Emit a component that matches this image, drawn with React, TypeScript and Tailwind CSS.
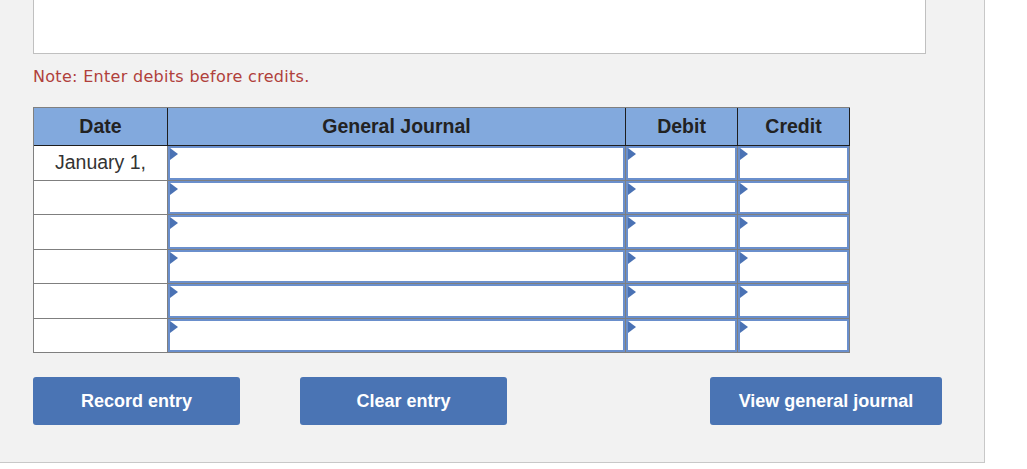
import React from "react";

const rowHeights = ["h-[35px]", "h-[34px]", "h-[35px]", "h-[34px]", "h-[35px]", "h-[34px]"];

function Tri() {
  return (
    <svg className="absolute left-0 top-0" width="8" height="12" viewBox="0 0 8 12">
      <path d="M0 0 L8 6 L0 12 Z" fill="#4a72b4" />
    </svg>
  );
}

function InputCell() {
  return (
    <div className="border-r border-b border-[#7f7f7f] bg-white">
      <div className="relative h-full w-full border-2 border-[#6a8fcc] bg-white">
        <Tri />
      </div>
    </div>
  );
}

export default function App() {
  const font = { fontFamily: '"Liberation Sans", Arial, sans-serif' } as React.CSSProperties;
  return (
    <div className="w-[1027px] h-[469px] bg-white" style={font}>
      <div className="w-[985px] h-[463px] bg-[#f2f2f2] border-r border-b border-[#c8c8c8] pl-[33px]">
        <div className="w-[893px] h-[54px] bg-white border-x border-b border-[#c0c0c0]" />
        <div
          className="mt-[13px] h-[20px] leading-[20px] text-[16px] tracking-[0.3px] text-[#b0403b]"
          style={{ fontFamily: '"DejaVu Sans", Verdana, sans-serif' }}
        >
          Note: Enter debits before credits.
        </div>
        <div className="mt-[20px] w-[817px] border-t border-l border-[#808080]">
          <div className="grid grid-cols-[134px_458px_112px_112px] h-[38px] bg-[#82a9dd] border-b border-[#1e1e1e]">
            {["Date", "General Journal", "Debit", "Credit"].map((h) => (
              <div
                key={h}
                className="flex items-center justify-center border-r border-[#1e1e1e] text-[19.5px] font-bold text-[#222]"
              >
                {h}
              </div>
            ))}
          </div>
          {rowHeights.map((rh, i) => (
            <div key={i} className={`grid grid-cols-[134px_458px_112px_112px] ${rh}`}>
              <div className="flex items-center justify-center border-r border-b border-[#7f7f7f] bg-white text-[19.5px] text-[#333]">
                {i === 0 ? "January 1," : ""}
              </div>
              <InputCell />
              <InputCell />
              <InputCell />
            </div>
          ))}
        </div>
        <div className="mt-[24px] w-[909px] flex">
          <button className="w-[207px] h-[48px] rounded-[3px] bg-[#4a74b4] text-white font-bold text-[18px]">
            Record entry
          </button>
          <button className="ml-[60px] w-[207px] h-[48px] rounded-[3px] bg-[#4a74b4] text-white font-bold text-[18px]">
            Clear entry
          </button>
          <button className="ml-auto w-[232px] h-[48px] rounded-[3px] bg-[#4a74b4] text-white font-bold text-[18px]">
            View general journal
          </button>
        </div>
      </div>
    </div>
  );
}
